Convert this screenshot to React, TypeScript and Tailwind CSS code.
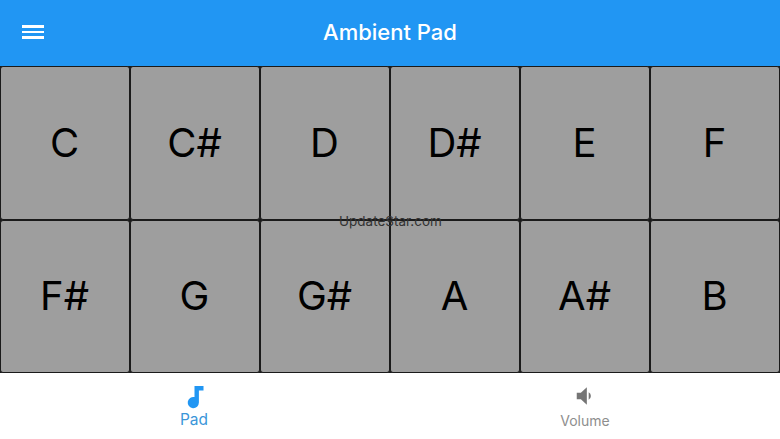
const notes = ["C", "C#", "D", "D#", "E", "F", "F#", "G", "G#", "A", "A#", "B"];

export default function App() {
  return (
    <div className="relative w-[780px] h-[439px] flex flex-col bg-white overflow-hidden font-['Inter',sans-serif]">
      {/* Header */}
      <div className="h-[66px] shrink-0 flex items-center justify-center relative bg-[#2196f3]">
        <div className="absolute left-[22px] top-[25px] w-[22px] flex flex-col gap-[3px]">
          <div className="h-[2.5px] bg-white" />
          <div className="h-[2.5px] bg-white" />
          <div className="h-[2.5px] bg-white" />
        </div>
        <h1 className="text-[22px] font-medium text-white -mt-[1px]">Ambient Pad</h1>
      </div>

      {/* Pads */}
      <div className="h-[307px] shrink-0 grid grid-cols-6 grid-rows-2 bg-[#1a1a1a]">
        {notes.map((note) => (
          <div
            key={note}
            className="flex items-center justify-center bg-[#9e9e9e] border border-[#1a1a1a] rounded-[3px] text-[40px] text-black"
          >
            <span className="-ml-[1px]">{note}</span>
          </div>
        ))}
      </div>

      {/* Bottom tabs */}
      <div className="flex-1 grid grid-cols-2">
        <div className="flex flex-col items-center pt-[12px] pr-[2px]">
          <svg className="w-[24px] h-[24px] text-[#2196f3]" viewBox="0 0 24 24" fill="currentColor">
            <path d="M12.5 1h9v4.6h-4.6v12a5.6 5.6 0 1 1-4.4-5.5z" />
          </svg>
          <span className="text-[15.5px] leading-[20px] mt-[1px] text-[#3b96d9]">Pad</span>
        </div>
        <div className="flex flex-col items-center pt-[12px]">
          <svg className="w-[22px] h-[22px] text-[#757575]" viewBox="0 0 24 24" fill="currentColor">
            <path d="M3 8.5h4.5L14 2.5v19l-6.5-6H3z" />
            <path d="M16 8a4.5 4.5 0 0 1 0 8z" />
          </svg>
          <span className="text-[14px] leading-[20px] mt-[4px] text-[#8e8e8e]">Volume</span>
        </div>
      </div>

      {/* Watermark */}
      <div className="absolute left-[339px] top-[212px] text-[13.5px] leading-[18px] text-[#333333]">UpdateStar.com</div>
    </div>
  );
}
